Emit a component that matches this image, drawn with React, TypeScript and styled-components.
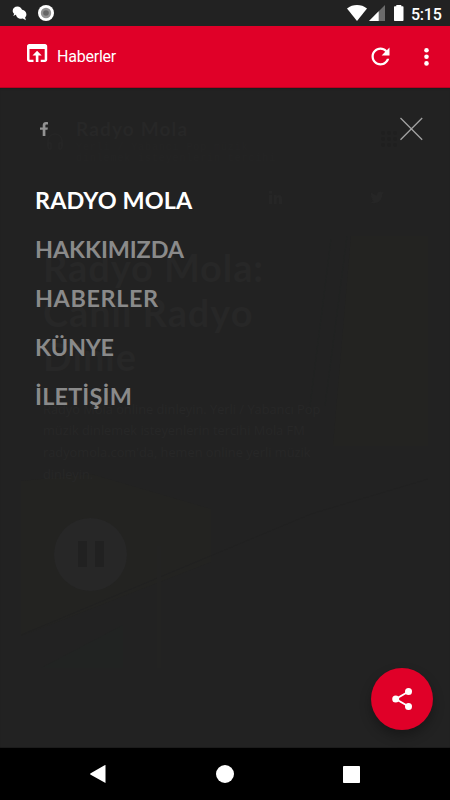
import React from "react";
import styled, { createGlobalStyle } from "styled-components";

const Global = createGlobalStyle`
  * { box-sizing: border-box; }
  body { margin: 0; background: #222; }
  svg { display: block; flex: none; }
`;

const Screen = styled.div`
  width: 450px;
  height: 800px;
  display: flex;
  flex-direction: column;
  background: #222;
  overflow: hidden;
  font-family: Roboto, sans-serif;
`;

const StatusBar = styled.header`
  height: 26px;
  flex: none;
  display: flex;
  align-items: center;
  justify-content: space-between;
  padding: 0 8.5px 0 12px;
  color: #fff;
`;

const StatusGroup = styled.div<{ $gap: number }>`
  display: flex;
  align-items: center;
  gap: ${(p) => p.$gap}px;
`;

const Clock = styled.span`
  font-size: 16px;
  line-height: 20px;
  font-weight: 500;
  padding-top: 3px;
  margin-left: 4px;
  letter-spacing: -0.25px;
`;

const AppBar = styled.div`
  height: 62px;
  flex: none;
  display: flex;
  align-items: center;
  background: #e00028;
  border-bottom: 1px solid #b80020;
  color: #fff;
  padding: 0 11px 0 25px;
`;

const AppTitle = styled.h1`
  margin: 1px auto 0 8px;
  font-size: 16px;
  font-weight: 400;
  line-height: 20px;
  letter-spacing: -0.22px;
`;

const BarButton = styled.button<{ $gap?: number }>`
  border: 0;
  padding: 0;
  background: none;
  color: #fff;
  margin-left: ${(p) => p.$gap ?? 0}px;
`;

const Content = styled.main`
  position: relative;
  flex: 1;
  overflow: hidden;
  box-shadow: inset 0 2px 2px -1px #151f1e, inset 0 -1px 0 #1b1b1b;
`;

const Page = styled.div`
  margin: 20px 22px 0 21px;
  height: 560px;
  color: #272727;
  background: #222;
`;

const StationHeader = styled.div`
  display: flex;
  height: 70px;
  padding: 12px 25px 0 25px;
`;

const StationText = styled.div`
  width: 286px;
  margin-left: 12px;
`;

const StationName = styled.div`
  font: 700 19px/18px Lato, sans-serif;
  letter-spacing: 1.15px;
`;

const Tagline = styled.p`
  margin: 4px 0 0;
  font: 10px/11px "Liberation Mono", monospace;
  letter-spacing: 0.9px;
  white-space: pre-line;
  color: #242424;
`;

const Socials = styled.div`
  display: flex;
  justify-content: space-between;
  height: 58px;
  padding: 13px 44px 0 248px;
  color: #262626;
`;

const Hero = styled.section`
  position: relative;
  height: 432px;
  padding: 9px 22px;
  background: #222;
`;

const HeroPhoto = styled.svg`
  position: absolute;
  inset: 0;
`;

const HeroBody = styled.div`
  position: relative;
`;

const HeroTitle = styled.h2`
  margin: 0;
  font: 700 38px/44.5px Lato, sans-serif;
  letter-spacing: 0.9px;
  white-space: pre-line;
`;

const HeroText = styled.p`
  margin: 20px 0 0;
  font: 12.8px/21.8px "Open Sans", sans-serif;
  white-space: pre-line;
`;

const PauseButton = styled.div`
  width: 73px;
  height: 73px;
  margin: 32px 0 0 11px;
  border-radius: 50%;
  display: flex;
  align-items: center;
  justify-content: center;
  gap: 8px;
  background: #272727;
`;

const PauseBar = styled.span`
  width: 9px;
  height: 26px;
  background: #212121;
`;

const MenuOverlay = styled.nav`
  position: absolute;
  inset: 0;
  padding: 29px 27px 0 35px;
`;

const OverlayTop = styled.div`
  display: flex;
  justify-content: space-between;
  align-items: center;
  height: 24px;
  color: #929292;
`;

const MenuList = styled.ul`
  list-style: none;
  margin: 35px 0 0;
  padding: 0;
`;

const MenuItem = styled.li<{ $active?: boolean; $spacing: number }>`
  height: 49.1px;
  line-height: 49.1px;
  font-family: Lato, sans-serif;
  font-size: 23.4px;
  font-weight: 700;
  letter-spacing: ${(p) => p.$spacing}px;
  color: ${(p) => (p.$active ? "#fff" : "#8a8a8a")};
`;

const ShareButton = styled.button`
  position: absolute;
  right: 17px;
  bottom: 18px;
  width: 62px;
  height: 62px;
  padding: 0;
  border: 0;
  border-radius: 50%;
  display: grid;
  place-items: center;
  color: #fff;
  background: #e00028;
  box-shadow: 0 6px 12px rgba(0, 0, 0, 0.3);
`;

const SystemNav = styled.footer`
  height: 52px;
  flex: none;
  display: flex;
  align-items: center;
  justify-content: space-between;
  padding: 0 90px 0 90px;
  background: #000;
`;

const menu = [
  { label: "RADYO MOLA", spacing: 0.1, active: true },
  { label: "HAKKIMIZDA", spacing: -0.1 },
  { label: "HABERLER", spacing: 0.6 },
  { label: "KÜNYE", spacing: -0.25 },
  { label: "İLETİŞİM", spacing: 0.2 },
];

export default function App() {
  return (
    <Screen>
      <Global />
      <StatusBar>
        <StatusGroup $gap={11}>
          <svg width="15" height="15" viewBox="0 0 15 15" fill="currentColor">
            <path d="M5.500.5C2.700.5.700 2.400.7 4.700c0 1.300.6 2.300 1.500 3L1.300 9.900l2.900-1.300 6-4.400C9.500 2 7.800.5 5.500.5z" />
            <path d="M9.200 3.700c-3 0-5.200 2-5.200 4.600s2.200 4.500 5.200 4.500l1.600-.2 3.100 1.700-.8-2.800c.9-.8 1.300-1.900 1.300-3.200 0-2.600-2.400-4.600-5.200-4.600z" />
          </svg>
          <svg width="16" height="16" viewBox="0 0 16 16">
            <circle cx="8" cy="8" r="8" fill="#fff" />
            <circle cx="8" cy="8" r="5.200" fill="#929292" />
            <circle cx="8" cy="8" r="2.800" fill="#666" />
          </svg>
        </StatusGroup>
        <StatusGroup $gap={2}>
          <svg width="20" height="16" viewBox="0 0 20 16" fill="currentColor">
            <path d="M0 3.400C5.800-1.100 14.200-1.100 20 3.400L10 16z" />
          </svg>
          <svg width="16" height="16" viewBox="0 0 16 16">
            <path d="M16 0v16H0z" fill="#6b6b6b" />
            <path d="M9.700 6.300V16H0z" fill="#fff" />
          </svg>
          <svg width="18" height="16" viewBox="0 0 18 16" fill="currentColor">
            <path d="M9.300 0h5v1.200h1.500c.4 0 .7.300.7.700v13.400c0 .4-.3.700-.7.700H7.700c-.4 0-.7-.3-.7-.7V1.900c0-.4.300-.7.700-.7h1.600z" />
          </svg>
          <Clock>5:15</Clock>
        </StatusGroup>
      </StatusBar>

      <AppBar>
        <svg width="24" height="24" viewBox="0 0 24 24" fill="currentColor" transform="translate(0 -4)">
          <path d="M20 3H4.200C3 3 2 4 2 5.200v13.300C2 19.900 3 21 4.200 21H8.500v-2.200H4.500V8h15.200v10.800h-4V21H20c1.200 0 2.200-1 2.200-2.200V5.200C22.200 4 21.200 3 20 3zM12.100 9.800l-4.600 4.700h3.300V21h2.600v-6.500h3.300z" />
        </svg>
        <AppTitle>Haberler</AppTitle>
        <BarButton aria-label="Yenile">
          <svg width="27" height="27" viewBox="0 0 24 24" fill="currentColor">
            <path d="M17.650 6.350C16.200 4.900 14.210 4 12 4c-4.420 0-7.990 3.580-7.990 8s3.570 8 7.990 8c3.730 0 6.840-2.550 7.730-6h-2.080c-.82 2.330-3.040 4-5.650 4-3.310 0-6-2.690-6-6s2.690-6 6-6c1.660 0 3.140.69 4.220 1.780L13 11h7V4l-2.350 2.350z" />
          </svg>
        </BarButton>
        <BarButton $gap={20} aria-label="Diğer">
          <svg width="25" height="25" viewBox="0 0 24 24" fill="currentColor">
            <circle cx="12" cy="6" r="2.200" />
            <circle cx="12" cy="12.300" r="2.200" />
            <circle cx="12" cy="18.600" r="2.200" />
          </svg>
        </BarButton>
      </AppBar>

      <Content>
        <Page>
          <StationHeader>
            <svg width="18" height="32" viewBox="0 0 18 32" fill="none" stroke="#272727" strokeWidth="1">
              <path d="M2 26v-5a7 7 0 0 1 14 0v5M2 23h3v6H3l-1-2zM16 23h-3v6h2l1-2z" />
            </svg>
            <StationText>
              <StationName>Radyo Mola</StationName>
              <Tagline>{"Yerli / Yabancı Pop müzik\ndinlemek isteyenlerin tercihi"}</Tagline>
            </StationText>
            <svg width="46" height="34" viewBox="0 0 46 34" fill="#1f1f1f">
              {[16, 22, 28].map((y) =>
                [26, 32, 38].map((x) => <circle key={`${x}-${y}`} cx={x} cy={y - 3} r="1.700" />)
              )}
            </svg>
          </StationHeader>
          <Socials>
            <svg width="13" height="13" viewBox="0 0 13 13" fill="currentColor">
              <path d="M0 4h3v9H0zM0 0h3v2.700H0zM5 4h2.700v1.300c1-2 5.300-2 5.300 2V13h-3V8c0-2.200-2.200-2-2.200 0v5H5z" />
            </svg>
            <svg width="14" height="13" viewBox="0 0 24 22" fill="currentColor">
              <path d="M24 3l-3 3c0 12-11 18-21 13 3 0 5-1 7-2-2 0-4-2-4-4h2c-2-1-4-3-3-5l2 1C1 7 1 4 2 2c3 3 6 5 10 5 0-6 5-8 9-5l3-1-2 3z" />
            </svg>
          </Socials>
          <Hero>
            <HeroPhoto width="407" height="432" viewBox="0 0 407 432">
              <path d="M330 0h77v210H312z" fill="#232321" />
              <path d="M0 245l70-7 120 35v53L0 400z" fill="#232321" />
              <path d="M0 399l290-121 117-35" stroke="#212121" fill="none" />
              <path d="M310 3L288 178M326 0l-22 170" stroke="#212322" fill="none" />
              <path d="M20 432l82-43v43z" fill="#212322" />
              <path d="M138 310v122" stroke="#232322" strokeWidth="4" />
            </HeroPhoto>
            <HeroBody>
              <HeroTitle>{"Radyo Mola:\nCanlı Radyo\nDinle"}</HeroTitle>
              <HeroText>
                {"Radyo Mola online dinleyin. Yerli / Yabancı Pop\nmüzik dinlemek isteyenlerin tercihi Mola FM\nradyomola.com'da, hemen online yerli müzik\ndinleyin."}
              </HeroText>
              <PauseButton>
                <PauseBar />
                <PauseBar />
              </PauseButton>
            </HeroBody>
          </Hero>
        </Page>

        <MenuOverlay>
          <OverlayTop>
            <svg width="18" height="14" viewBox="0 0 18 14" fill="currentColor">
              <path d="M13 .2v2.300h-1.400c-1 0-1.200.5-1.200 1.200v1.700h2.500l-.4 2.400h-2.100V14H7.700V7.800H5V5.400h2.700V3.300C7.700 1.200 9 0 11 0c.9 0 1.700.1 2 .2z" />
            </svg>
            <svg width="24" height="24" viewBox="0 0 24 24" fill="none" stroke="#a2a2a2" strokeWidth="1.300">
              <path d="M1.500 1L23.200 22.700M23.200 1L1.500 22.700" />
            </svg>
          </OverlayTop>
          <MenuList>
            {menu.map((m) => (
              <MenuItem key={m.label} $active={m.active} $spacing={m.spacing}>
                {m.label}
              </MenuItem>
            ))}
          </MenuList>
        </MenuOverlay>

        <ShareButton aria-label="Paylaş">
          <svg width="26" height="26" viewBox="0 0 26 26" fill="currentColor">
            <path d="M6.700 13l13-7.500M6.700 13l13 7.500" stroke="currentColor" strokeWidth="2" />
            <circle cx="6.700" cy="13" r="3.500" />
            <circle cx="19.500" cy="5.500" r="3.500" />
            <circle cx="19.500" cy="20.500" r="3.500" />
          </svg>
        </ShareButton>
      </Content>

      <SystemNav>
        <svg width="17" height="18" viewBox="0 0 17 18" fill="#fff">
          <path d="M15.500 0v18L.7 9.800c-.7-.4-.7-1.200 0-1.600L14.600.2z" />
        </svg>
        <svg width="18" height="18" viewBox="0 0 18 18" fill="#fff">
          <circle cx="9" cy="9" r="9" />
        </svg>
        <svg width="17" height="17" viewBox="0 0 17 17" fill="#fff">
          <rect width="17" height="17" rx="0.800" />
        </svg>
      </SystemNav>
    </Screen>
  );
}
